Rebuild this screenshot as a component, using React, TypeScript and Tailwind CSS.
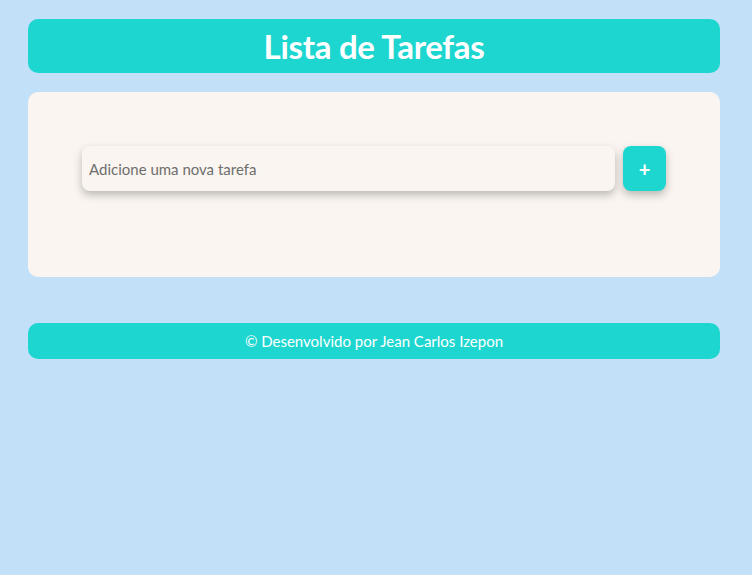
import React from "react";

export default function App() {
  return (
    <div
      className="min-h-[575px] w-full bg-[#c2e1f8] pt-[19px]"
      style={{ fontFamily: '"Gill Sans", Lato, "Open Sans", sans-serif' }}
    >
      <div className="ml-[28px] flex h-[54px] w-[692px] items-center justify-center rounded-[10px] bg-[#1dd6cf]">
        <h1 className="text-[33px] font-bold leading-none tracking-[-0.3px] text-white">Lista de Tarefas</h1>
      </div>
      <div className="ml-[28px] mt-[19px] h-[185px] w-[692px] rounded-[10px] bg-[#faf5f0] px-[54px] pt-[54px]">
        <div className="flex gap-[8px]">
          <input
            className="h-[45px] flex-1 rounded-[8px] bg-[#faf5f0] px-[7px] text-[15px] text-[#444] shadow-[0_4px_8px_rgba(0,0,0,0.25)] outline-none placeholder:text-[#6e6e6e]"
            placeholder="Adicione uma nova tarefa"
          />
          <button className="flex h-[45px] w-[43px] items-center justify-center rounded-[8px] bg-[#1dd6cf] text-[20px] font-bold text-white shadow-[0_4px_8px_rgba(0,0,0,0.25)]">
            +
          </button>
        </div>
      </div>
      <div className="ml-[28px] mt-[46px] flex h-[36px] w-[692px] items-center justify-center rounded-[10px] bg-[#1dd6cf]">
        <p className="text-[15px] text-white">© Desenvolvido por Jean Carlos Izepon</p>
      </div>
    </div>
  );
}
